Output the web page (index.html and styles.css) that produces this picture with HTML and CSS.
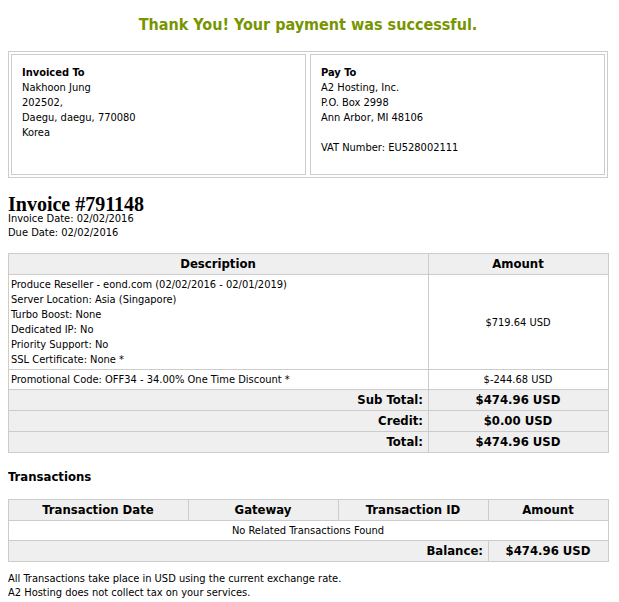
FILE: index.html
```html
<!DOCTYPE html>
<html>
<head>
<meta charset="utf-8">
<title>Invoice #791148</title>
<link rel="stylesheet" href="styles.css">
</head>
<body>
<div class="wrapper">
  <div class="success">Thank You! Your payment was successful.</div>

  <div class="addresses">
    <div class="addr">
      <strong>Invoiced To</strong><br>
      Nakhoon Jung<br>
      202502,<br>
      Daegu, daegu, 770080<br>
      Korea
    </div>
    <div class="addr">
      <strong>Pay To</strong><br>
      A2 Hosting, Inc.<br>
      P.O. Box 2998<br>
      Ann Arbor, MI 48106<br>
      <br>
      VAT Number: EU528002111
    </div>
  </div>

  <div class="inv-title">Invoice #791148</div>
  <div class="inv-dates">
    Invoice Date: 02/02/2016<br>
    Due Date: 02/02/2016
  </div>

  <table class="items">
    <colgroup><col class="c-desc"><col class="c-amt"></colgroup>
    <tr class="head"><td>Description</td><td>Amount</td></tr>
    <tr>
      <td class="desc">Produce Reseller - eond.com (02/02/2016 - 02/01/2019)<br>Server Location: Asia (Singapore)<br>Turbo Boost: None<br>Dedicated IP: No<br>Priority Support: No<br>SSL Certificate: None *</td>
      <td class="amt">$719.64 USD</td>
    </tr>
    <tr>
      <td class="desc">Promotional Code: OFF34 - 34.00% One Time Discount *</td>
      <td class="amt">$-244.68 USD</td>
    </tr>
    <tr class="sum"><td class="lbl">Sub Total:</td><td class="val">$474.96 USD</td></tr>
    <tr class="sum"><td class="lbl">Credit:</td><td class="val">$0.00 USD</td></tr>
    <tr class="sum"><td class="lbl">Total:</td><td class="val">$474.96 USD</td></tr>
  </table>

  <div class="section">Transactions</div>

  <table class="items trans">
    <colgroup><col class="t1"><col class="t2"><col class="t3"><col class="t4"></colgroup>
    <tr class="head"><td>Transaction Date</td><td>Gateway</td><td>Transaction ID</td><td>Amount</td></tr>
    <tr><td class="none" colspan="4">No Related Transactions Found</td></tr>
    <tr class="sum"><td class="lbl" colspan="3">Balance:</td><td class="val">$474.96 USD</td></tr>
  </table>

  <div class="notes">
    All Transactions take place in USD using the current exchange rate.<br>
    A2 Hosting does not collect tax on your services.
  </div>
</div>
</body>
</html>
```

FILE: styles.css
```css
html, body {
  background: #fff;
}
body {
  margin: 8px;
  font-family: "DejaVu Sans Condensed", "DejaVu Sans", sans-serif;
  font-size: 11px;
  line-height: 15px;
  color: #000;
}
.wrapper {
  width: 600px;
}
.success {
  margin-top: 7px;
  text-align: center;
  color: #779500;
  font-weight: bold;
  font-size: 16px;
  line-height: 20px;
}
.addresses {
  margin-top: 16px;
  border: 1px solid #ccc;
  padding: 2px;
  display: grid;
  grid-template-columns: 1fr 1fr;
  gap: 4px;
}
.addr {
  border: 1px solid #ccc;
  padding: 10px 10px 19px;
  min-height: 90px;
}
.inv-title {
  margin-top: 18px;
  font-family: "Liberation Serif", serif;
  font-weight: bold;
  font-size: 20px;
  line-height: 16px;
}
.inv-dates {
  line-height: 14px;
}
.items {
  margin-top: 13px;
  width: 600px;
  border-collapse: collapse;
  table-layout: fixed;
}
.items td {
  border: 1px solid #ccc;
  padding: 2px 3px 2px 2px;
  vertical-align: middle;
}
.c-desc { width: 420px; }
.c-amt { width: 180px; }
.items .head td {
  background: #efefef;
  font-weight: bold;
  font-size: 13px;
  line-height: 16px;
  text-align: center;
}
.items .amt {
  text-align: center;
}
.items .sum td {
  background: #efefef;
  font-weight: bold;
  font-size: 13px;
  line-height: 16px;
}
.items .sum .lbl {
  text-align: right;
  padding-right: 5px;
}
.items .sum .val {
  text-align: center;
}
.section {
  margin-top: 16px;
  font-weight: bold;
  font-size: 13px;
  line-height: 16px;
}
.trans {
  margin-top: 14px;
}
.t1 { width: 180px; }
.t2 { width: 150px; }
.t3 { width: 150px; }
.t4 { width: 120px; }
.trans .none {
  text-align: center;
}
.notes {
  margin-top: 10px;
  line-height: 14px;
}
```
